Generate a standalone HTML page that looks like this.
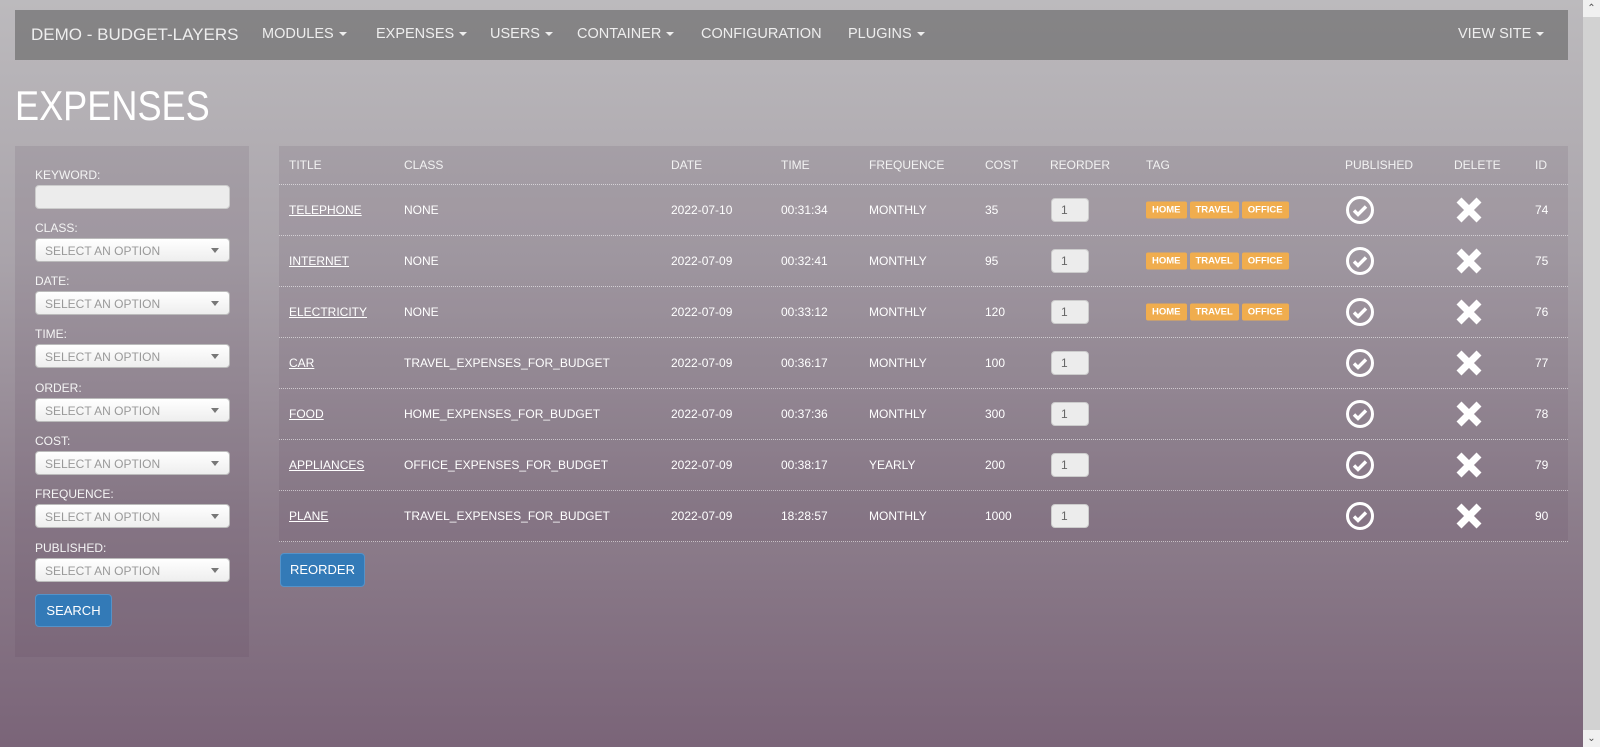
<!DOCTYPE html>
<html><head><meta charset="utf-8">
<style>
*{box-sizing:border-box;margin:0;padding:0}
html,body{width:1600px;height:747px;overflow:hidden}
body{font-family:"Liberation Sans",sans-serif;color:#fff;background:linear-gradient(#bcbabd 0%,#a9a3aa 35%,#8c7d8b 70%,#7a6478 100%);position:relative}
.sb{position:absolute;left:1583px;top:0;width:17px;height:747px;background:#d2d2d2}
.sb .up,.sb .dn{position:absolute;left:0;width:17px;height:17px;background:#f0f0f0;color:#555;font-size:10px;text-align:center;line-height:17px}
.sb .up{top:0}.sb .dn{bottom:0}
.nav{position:absolute;left:15px;top:10px;width:1553px;height:50px;background:rgba(90,90,90,.55);font-size:14.5px;color:#eee}
.nav span{position:absolute;top:16px;white-space:nowrap}
.car{display:inline-block;width:0;height:0;border-left:4px solid transparent;border-right:4px solid transparent;border-top:4px solid #eee;vertical-align:middle;margin-left:5px}
h1{position:absolute;left:15px;top:82px;font-size:42px;font-weight:normal;transform:scaleX(.86);transform-origin:left top}
.side{position:absolute;left:15px;top:146px;width:234px;height:511px;background:rgba(80,60,80,.12)}
.side label{position:absolute;left:20px;font-size:12px;color:#f4f4f4}
.side .inp{position:absolute;left:20px;width:195px;height:24px;border-radius:4px;background:#ececec;border:1px solid #ccc}
.side .sel{position:absolute;left:20px;width:195px;height:24px;border-radius:4px;background:linear-gradient(#fff,#eee);border:1px solid #bbb;color:#999;font-size:12px;padding:5px 9px}
.side .sel:after{content:"";position:absolute;right:10px;top:9px;border-left:4px solid transparent;border-right:4px solid transparent;border-top:5px solid #777}
.btn{position:absolute;background:#337ab7;border:1px solid #5592c8;border-radius:4px;color:#fff;font-size:13px;text-align:center}
.tbl{position:absolute;left:279px;top:146px;width:1289px;height:396px;background:rgba(80,60,80,.12)}
.row{position:absolute;left:0;width:1289px;height:51px;border-bottom:1px dotted rgba(255,255,255,.55);font-size:12px}
.row div{position:absolute;top:50%;transform:translateY(-50%);white-space:nowrap}
.hd{height:39px;top:0;color:#f2f2f2}
u{text-decoration:underline}
.num{width:38px;height:24px;border-radius:4px;background:#ececec;border:1px solid #ccc;color:#666;padding:4px 9px;font-size:12px}
.tag{display:inline-block;background:#f0ad4e;color:#fff;font-weight:bold;font-size:9.5px;padding:3px 6px;border-radius:2px;margin-right:3px}
</style></head><body>
<div class="nav">
<span style="left:16px;font-size:17px;top:15px">DEMO - BUDGET-LAYERS</span>
<span style="left:247px">MODULES<i class="car"></i></span>
<span style="left:361px">EXPENSES<i class="car"></i></span>
<span style="left:475px">USERS<i class="car"></i></span>
<span style="left:562px">CONTAINER<i class="car"></i></span>
<span style="left:686px">CONFIGURATION</span>
<span style="left:833px">PLUGINS<i class="car"></i></span>
<span style="left:1443px">VIEW SITE<i class="car"></i></span>
</div>
<h1>EXPENSES</h1>
<div class="side">
<label style="top:22px">KEYWORD:</label><div class="inp" style="top:39px"></div>
<label style="top:75px">CLASS:</label><div class="sel" style="top:92px">SELECT AN OPTION</div>
<label style="top:128px">DATE:</label><div class="sel" style="top:145px">SELECT AN OPTION</div>
<label style="top:181px">TIME:</label><div class="sel" style="top:198px">SELECT AN OPTION</div>
<label style="top:235px">ORDER:</label><div class="sel" style="top:252px">SELECT AN OPTION</div>
<label style="top:288px">COST:</label><div class="sel" style="top:305px">SELECT AN OPTION</div>
<label style="top:341px">FREQUENCE:</label><div class="sel" style="top:358px">SELECT AN OPTION</div>
<label style="top:395px">PUBLISHED:</label><div class="sel" style="top:412px">SELECT AN OPTION</div>
<div class="btn" style="left:20px;top:448px;width:77px;height:33px;line-height:31px">SEARCH</div>
</div>
<div class="tbl">
<div class="row hd">
<div style="left:10px">TITLE</div><div style="left:125px">CLASS</div><div style="left:392px">DATE</div><div style="left:502px">TIME</div><div style="left:590px">FREQUENCE</div><div style="left:706px">COST</div><div style="left:771px">REORDER</div><div style="left:867px">TAG</div><div style="left:1066px">PUBLISHED</div><div style="left:1175px">DELETE</div><div style="left:1256px">ID</div>
</div>
</div>
<div class="btn" style="left:280px;top:553px;width:85px;height:34px;line-height:32px">REORDER</div>
<div class="sb"><div class="up">&#8963;</div><div class="dn">&#8964;</div></div>
<script>
var d=[["TELEPHONE","NONE","2022-07-10","00:31:34","MONTHLY","35",1,"74"],["INTERNET","NONE","2022-07-09","00:32:41","MONTHLY","95",1,"75"],["ELECTRICITY","NONE","2022-07-09","00:33:12","MONTHLY","120",1,"76"],["CAR","TRAVEL_EXPENSES_FOR_BUDGET","2022-07-09","00:36:17","MONTHLY","100",0,"77"],["FOOD","HOME_EXPENSES_FOR_BUDGET","2022-07-09","00:37:36","MONTHLY","300",0,"78"],["APPLIANCES","OFFICE_EXPENSES_FOR_BUDGET","2022-07-09","00:38:17","YEARLY","200",0,"79"],["PLANE","TRAVEL_EXPENSES_FOR_BUDGET","2022-07-09","18:28:57","MONTHLY","1000",0,"90"]];
var t=document.querySelector('.tbl'),h='';
var chk='<svg width="30" height="30" viewBox="0 0 30 30"><circle cx="15" cy="15" r="12.5" fill="none" stroke="#fff" stroke-width="3"/><path d="M9 15.5l4 4 8-8" fill="none" stroke="#fff" stroke-width="3.4"/></svg>';
var x='<svg width="26" height="26" viewBox="0 0 26 26"><path d="M3 3L23 23M23 3L3 23" stroke="#fff" stroke-width="7"/></svg>';
d.forEach(function(r,i){h+='<div class="row" style="top:'+(39+51*i)+'px"><div style="left:10px"><u>'+r[0]+'</u></div><div style="left:125px">'+r[1]+'</div><div style="left:392px">'+r[2]+'</div><div style="left:502px">'+r[3]+'</div><div style="left:590px">'+r[4]+'</div><div style="left:706px">'+r[5]+'</div><div class="num" style="left:772px">1</div>'+(r[6]?'<div style="left:867px"><span class="tag">HOME</span><span class="tag">TRAVEL</span><span class="tag">OFFICE</span></div>':'')+'<div style="left:1066px;height:30px">'+chk+'</div><div style="left:1177px;height:26px">'+x+'</div><div style="left:1256px">'+r[7]+'</div></div>';});
t.innerHTML+=h;
</script>
</body></html>
